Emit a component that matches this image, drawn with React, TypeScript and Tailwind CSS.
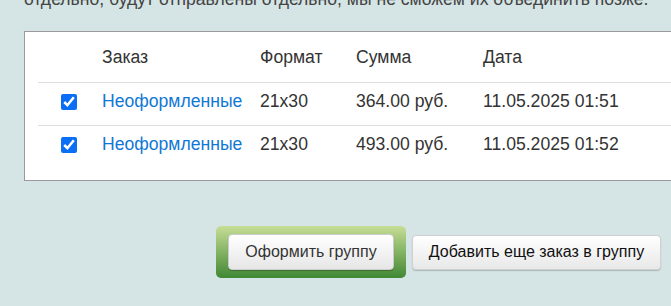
import React from 'react'

const orders = [
  { name: 'Неоформленные', format: '21x30', sum: '364.00 руб.', date: '11.05.2025 01:51' },
  { name: 'Неоформленные', format: '21x30', sum: '493.00 руб.', date: '11.05.2025 01:52' },
]

const cols = 'grid grid-cols-[56px_158px_96px_127px_1fr]'

const App = () => {
  return (
    <div className="w-[671px] h-[306px] overflow-hidden bg-[#d5e4e4] font-['Liberation_Sans',Arial,sans-serif] text-[17.6px] leading-6 text-[#333]">
      <p className="ml-[24px] mt-[-13px] whitespace-nowrap text-[#444]">
        отдельно, будут отправлены отдельно, мы не сможем их объединить позже.
      </p>

      <div className="ml-[24px] mt-[20px] w-[700px] border border-[#9a9a9a] bg-white px-[13px] pb-[12px]">
        <div className={`${cols} h-[50px] pt-[13px]`}>
          <div></div>
          <div className="pl-2">Заказ</div>
          <div className="pl-2">Формат</div>
          <div className="pl-2">Сумма</div>
          <div className="pl-2">Дата</div>
        </div>

        {orders.map((o, i) => (
          <div key={i} className={`${cols} h-[43px] border-t border-[#dddddd] pt-[6px]`}>
            <div className="pl-[23px] pt-[5px]">
              <input type="checkbox" defaultChecked className="block w-4 h-4 accent-[#0a6ff5]" />
            </div>
            <div className="pl-2">
              <a href="#" className="text-[#0f78d6]">{o.name}</a>
            </div>
            <div className="pl-2">{o.format}</div>
            <div className="pl-2">{o.sum}</div>
            <div className="pl-2">{o.date}</div>
          </div>
        ))}
      </div>

      <div className="mt-[45px] flex items-center justify-end gap-[6px] pr-[10px] text-[16px]">
        <div className="rounded-[5px] bg-linear-to-b from-[#c6de95] to-[#3f8834] px-[12px] py-[8px]">
          <button className="h-[36px] w-[166px] rounded-[4px] border border-[#cccccc] bg-linear-to-b from-white to-[#e6e6e6] text-[#333] shadow-[0_1px_1px_rgba(0,0,0,0.25)]">
            Оформить группу
          </button>
        </div>
        <button className="h-[35px] w-[249px] rounded-[4px] border border-[#d0d0d0] bg-linear-to-b from-white to-[#e8e8e8] text-[#111] shadow-[0_1px_1px_rgba(0,0,0,0.2)]">
          Добавить еще заказ в группу
        </button>
      </div>
    </div>
  )
}

export default App
